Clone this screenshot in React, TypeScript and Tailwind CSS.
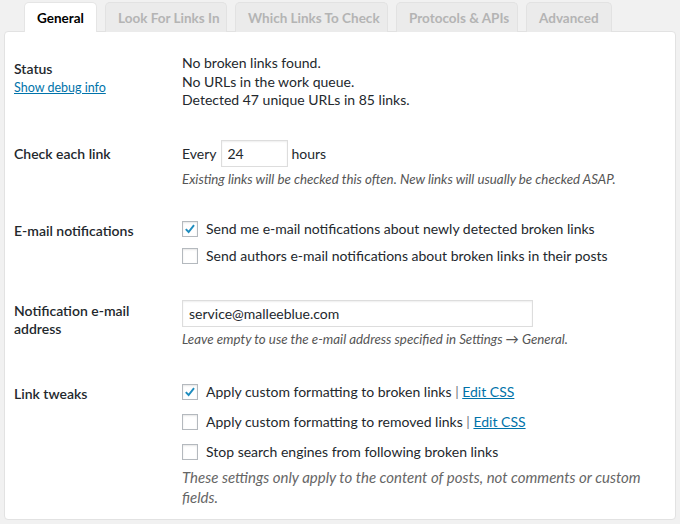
import { useState } from 'react';

const tabs = [
  { name: 'General', w: 'w-[73px]' },
  { name: 'Look For Links In', w: 'w-[122px]' },
  { name: 'Which Links To Check', w: 'w-[153px]' },
  { name: 'Protocols & APIs', w: 'w-[122px]' },
  { name: 'Advanced', w: 'w-[86px]' },
];

function Check({ checked }: { checked?: boolean }) {
  return (
    <span className="flex h-4 w-4 shrink-0 items-center justify-center border border-[#b4b9be] bg-white shadow-[inset_0_1px_2px_rgba(0,0,0,0.1)]">
      {checked && (
        <svg viewBox="0 0 16 16" className="h-[14px] w-[14px]">
          <path d="M3.2 8.2 L6.4 11.4 L12.6 3.6" fill="none" stroke="#1e8cbe" strokeWidth="2.2" />
        </svg>
      )}
    </span>
  );
}

function CheckRow({ checked, label, css }: { checked?: boolean; label: string; css?: boolean }) {
  return (
    <div className="flex h-[22px] items-center gap-[8px]">
      <Check checked={checked} />
      <span>
        {label}
        {css && (
          <>
            {' '}
            <span className="text-[#72777c]">|</span>{' '}
            <a className="text-[#0073aa] underline">Edit CSS</a>
          </>
        )}
      </span>
    </div>
  );
}

function Row({
  label,
  children,
  className,
  labelPad,
}: {
  label: React.ReactNode;
  children: React.ReactNode;
  className?: string;
  labelPad: string;
}) {
  return (
    <div className={`flex ${className ?? ''}`}>
      <div className={`w-[168px] shrink-0 pr-[18px] font-semibold leading-[18px] ${labelPad}`}>{label}</div>
      <div className="flex-1">{children}</div>
    </div>
  );
}

export default function App() {
  const [active] = useState(0);
  return (
    <div
      className="h-[524px] w-[680px] bg-[#f1f1f1] text-[14px] text-[#23282d]"
      style={{ fontFamily: 'Lato, "Open Sans", sans-serif' }}
    >
      <div className="flex gap-2 pl-6 pt-[2px]">
        {tabs.map((t, i) => (
          <div
            key={t.name}
            className={`relative z-10 -mb-px flex h-[30px] items-center overflow-hidden whitespace-nowrap rounded-t-[5px] border border-b-0 pl-[12px] pt-[2px] text-[13.5px] font-bold ${t.w} ${
              i === active
                ? 'border-[#e5e5e5] bg-white text-[#000]'
                : 'border-[#e2e2e2] bg-[#ebebeb] text-[#b4b4b4]'
            }`}
          >
            {t.name}
          </div>
        ))}
      </div>
      <div className="mx-1 h-[489px] rounded-[4px] border border-[#e2e2e2] bg-white px-[9px] pt-[22px]">
        <Row
          labelPad="pt-[6px]"
          label={
            <>
              <div>Status</div>
              <a className="text-[12.5px] font-normal text-[#0073aa] underline">Show debug info</a>
            </>
          }
        >
          <div className="leading-[18.5px]">
            <div>No broken links found.</div>
            <div>No URLs in the work queue.</div>
            <div>Detected 47 unique URLs in 85 links.</div>
          </div>
        </Row>

        <Row label="Check each link" labelPad="pt-[5px]" className="mt-[30px]">
          <div className="flex items-center gap-[4px]">
            <span>Every</span>
            <input
              readOnly
              value="24"
              className="h-[27px] w-[67px] border border-[#ddd] px-[6px] shadow-[inset_0_1px_2px_rgba(0,0,0,0.07)] outline-none"
            />
            <span>hours</span>
          </div>
          <p className="mt-[3px] text-[13.3px] italic leading-[18px] text-[#555]">
            Existing links will be checked this often. New links will usually be checked ASAP.
          </p>
        </Row>

        <Row label="E-mail notifications" labelPad="pt-[4px]" className="mt-[30px]">
          <div className="flex flex-col gap-[5px]">
            <CheckRow checked label="Send me e-mail notifications about newly detected broken links" />
            <CheckRow label="Send authors e-mail notifications about broken links in their posts" />
          </div>
        </Row>

        <Row label="Notification e-mail address" labelPad="pt-[2px]" className="mt-[33px]">
          <input
            readOnly
            value="service@malleeblue.com"
            className="h-[27px] w-[351px] border border-[#ddd] px-[6px] shadow-[inset_0_1px_2px_rgba(0,0,0,0.07)] outline-none"
          />
          <p className="mt-[3px] text-[13.3px] italic leading-[18px] text-[#555]">
            Leave empty to use the e-mail address specified in Settings → General.
          </p>
        </Row>

        <Row label="Link tweaks" labelPad="pt-[4px]" className="mt-[33px]">
          <div className="flex flex-col gap-[8px]">
            <CheckRow checked css label="Apply custom formatting to broken links" />
            <CheckRow css label="Apply custom formatting to removed links" />
            <CheckRow label="Stop search engines from following broken links" />
          </div>
          <p className="mt-[4px] max-w-[470px] text-[15px] italic leading-[20px] text-[#666]">
            These settings only apply to the content of posts, not comments or custom fields.
          </p>
        </Row>
      </div>
    </div>
  );
}
